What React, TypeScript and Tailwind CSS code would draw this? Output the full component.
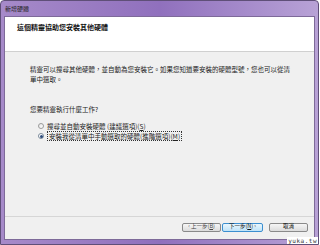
const font = { fontFamily: '"Noto Sans CJK TC", "Liberation Sans", sans-serif' };

export default function App() {
  return (
    <div className="relative h-[245px] w-[320px] overflow-hidden bg-white" style={font}>
      <div className="flex h-[245px] w-[319px] flex-col rounded-t-[4px] border border-[#5f4f78] bg-gradient-to-r from-[#a68ac9] via-[#9070bd] to-[#b8a2d6]">
        {/* title bar */}
        <div className="flex h-[15px] shrink-0 items-center pl-[4px] text-[6px] leading-none text-[#222]">新增硬體</div>
        {/* client area */}
        <div className="mx-[3px] flex flex-1 flex-col border border-[#7e6a99] bg-[#f0f0f0]">
          <div className="flex h-[35px] shrink-0 items-start border-b border-[#d0d0d0] bg-white pt-[5px] pl-[12px]">
            <span className="text-[7px] font-bold leading-[10px] text-[#111]">這個精靈協助您安裝其他硬體</span>
          </div>
          <div className="flex flex-1 flex-col pt-[12px] pl-[25px] pr-[20px] text-[6.5px] leading-[10px] text-[#222]">
            <p>精靈可以搜尋其他硬體，並自動為您安裝它。如果您知道要安裝的硬體型號，您也可以從清單中選取。</p>
            <p className="mt-[20px]">您要精靈執行什麼工作?</p>
            <div className="mt-[7px] flex flex-col pl-[8px]">
              <label className="flex h-[10px] items-center gap-[3px]">
                <span className="h-[6px] w-[6px] rounded-full border border-[#9a9a9a] bg-gradient-to-br from-[#e6e6e6] to-white" />
                <span>搜尋並自動安裝硬體 (建議選項)(<u>S</u>)</span>
              </label>
              <label className="flex h-[10px] items-center gap-[3px]">
                <span className="flex h-[6px] w-[6px] items-center justify-center rounded-full border border-[#7a8a9a] bg-white">
                  <span className="h-[3px] w-[3px] rounded-full bg-[#2b4a7a]" />
                </span>
                <span className="border border-dotted border-[#333] px-[1px] leading-[8px]">安裝我從清單中手動選取的硬體(進階選項)(<u>M</u>)</span>
              </label>
            </div>
          </div>
          <div className="flex h-[23px] shrink-0 items-center justify-end gap-[6px] border-t border-[#d6d6d6] pr-[6px] pb-[2px]">
            <div className="flex gap-[1px]">
              <button className="h-[9px] w-[39px] rounded-[2px] border border-[#8a8a8a] bg-gradient-to-b from-[#f6f6f6] to-[#dcdcdc] text-[5.5px] leading-none text-[#444]">‹ 上一步(<u>B</u>)</button>
              <button className="h-[9px] w-[41px] rounded-[2px] border border-[#3c8fd0] bg-gradient-to-b from-[#eaf6fd] to-[#bfe3f8] text-[5.5px] leading-none text-[#111]">下一步(<u>N</u>) ›</button>
            </div>
            <button className="h-[9px] w-[39px] rounded-[2px] border border-[#8a8a8a] bg-gradient-to-b from-[#f6f6f6] to-[#dcdcdc] text-[5.5px] leading-none text-[#111]">取消</button>
          </div>
        </div>
        <div className="h-[4px] shrink-0" />
      </div>
      <div className="absolute bottom-[1px] right-[2px] bg-white px-[1px] text-[6px] leading-[7px] tracking-[0.5px] text-[#333]" style={{ fontFamily: '"DejaVu Sans Mono", monospace' }}>yuka.tw</div>
    </div>
  );
}
